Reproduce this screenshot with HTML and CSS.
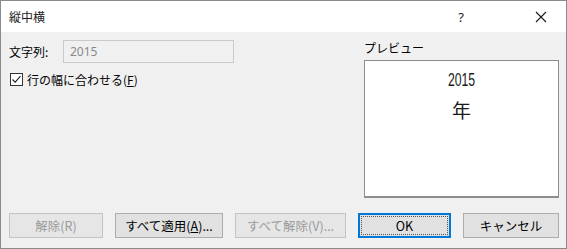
FILE: index.html
```html
<!DOCTYPE html>
<html lang="ja">
<head>
    <meta charset="UTF-8">
    <title>縦中横</title>
    <link rel="stylesheet" href="styles.css">
</head>
<body>

<div class="ventana">
    <div class="titulo">
        <span class="titulo-texto">縦中横</span>
        <span class="ayuda">?</span>
        <svg class="cerrar" width="12" height="12" viewBox="0 0 12 12">
            <path d="M1 1 L11 11 M11 1 L1 11" stroke="#1a1a1a" stroke-width="1.1" fill="none"/>
        </svg>
    </div>

    <div class="contenido">
        <div class="arriba">
            <div class="izquierda">
                <div class="fila-texto">
                    <label class="etiqueta">文字列:</label>
                    <div class="entrada">2015</div>
                </div>
                <div class="fila-check">
                    <svg class="check" width="13" height="13" viewBox="0 0 13 13">
                        <rect x="0.5" y="0.5" width="12" height="12" fill="#fff" stroke="#333"/>
                        <path d="M2.5 6.5 L5.2 9.2 L10.5 3.2" stroke="#222" stroke-width="1.1" fill="none"/>
                    </svg>
                    <span>行の幅に合わせる(<u>F</u>)</span>
                </div>
            </div>

            <div class="derecha">
                <div class="etiqueta-vista">プレビュー</div>
                <div class="vista">
                    <div class="vista-num">2015</div>
                    <div class="vista-ano">年</div>
                </div>
            </div>
        </div>

        <div class="botones">
            <button class="boton b1" disabled>解除(R)</button>
            <button class="boton b2">すべて適用(<u>A</u>)...</button>
            <button class="boton b3" disabled>すべて解除(V)...</button>
            <button class="boton b4 activo"><span class="foco">OK</span></button>
            <button class="boton b5">キャンセル</button>
        </div>
    </div>
</div>

</body>
</html>
```

FILE: styles.css
```css
body {
    margin: 0;
    padding: 0;
    font-family: "Noto Sans CJK JP", "Noto Sans", sans-serif;
    font-size: 12px;
    color: #000;
    background-color: #f0f0f0;
}
.ventana {
    width: 567px;
    height: 249px;
    box-sizing: border-box;
    border: 1px solid #8a8a8a;
    display: flex;
    flex-direction: column;
}
.titulo {
    height: 31px;
    background-color: #fff;
    display: flex;
    align-items: center;
    padding-left: 8px;
}
.titulo-texto {
    flex: 1;
    color: #222;
}
.ayuda {
    font-family: "Noto Sans", sans-serif;
    font-size: 13px;
    color: #222;
    margin-right: 71px;
}
.cerrar {
    margin-right: 19px;
}
.contenido {
    flex: 1;
    background-color: #f0f0f0;
    padding: 8px 7px 0 8px;
}
.arriba {
    display: flex;
    justify-content: space-between;
}
.fila-texto {
    display: flex;
    align-items: center;
}
.etiqueta {
    width: 54px;
}
.entrada {
    width: 163px;
    height: 21px;
    border: 1px solid #cacaca;
    padding-left: 6px;
    line-height: 21px;
    color: #8a8a8a;
    font-family: "Noto Sans", sans-serif;
    font-size: 12px;
}
.fila-check {
    display: flex;
    align-items: center;
    margin-top: 8px;
    margin-left: 1px;
}
.check {
    margin-right: 4px;
}
.derecha {
    width: 195px;
}
.etiqueta-vista {
    height: 20px;
    line-height: 16px;
}
.vista {
    height: 135px;
    background-color: #fff;
    border: 1px solid #8d8d8d;
    border-bottom-width: 2px;
    text-align: center;
}
.vista-num {
    font-family: "Liberation Sans", sans-serif;
    font-size: 18px;
    color: #1a1a1a;
    transform: scaleX(0.68);
    margin-top: 8px;
    line-height: 22px;
}
.vista-ano {
    font-size: 19px;
    line-height: 24px;
    margin-top: 7px;
    color: #1a1a1a;
}
.botones {
    display: flex;
    gap: 12px;
    margin-top: 15px;
}
.boton {
    height: 25px;
    font-family: inherit;
    font-size: 12.5px;
    background-color: #e1e1e1;
    border: 1px solid #adadad;
    color: #000;
    padding: 0;
}
.boton:disabled {
    background-color: #e6e6e6;
    border-color: #c4c4c4;
    color: #9a9a9a;
}
.b1 { width: 94px; }
.b2 { width: 108px; }
.b3 { width: 111px; }
.b4 { width: 93px; }
.b5 { width: 96px; }
.activo {
    border: 2px solid #0078d7;
    padding: 1px;
}
.foco {
    display: block;
    height: 100%;
    box-sizing: border-box;
    border: 1px dotted #555;
    line-height: 17px;
}
```
